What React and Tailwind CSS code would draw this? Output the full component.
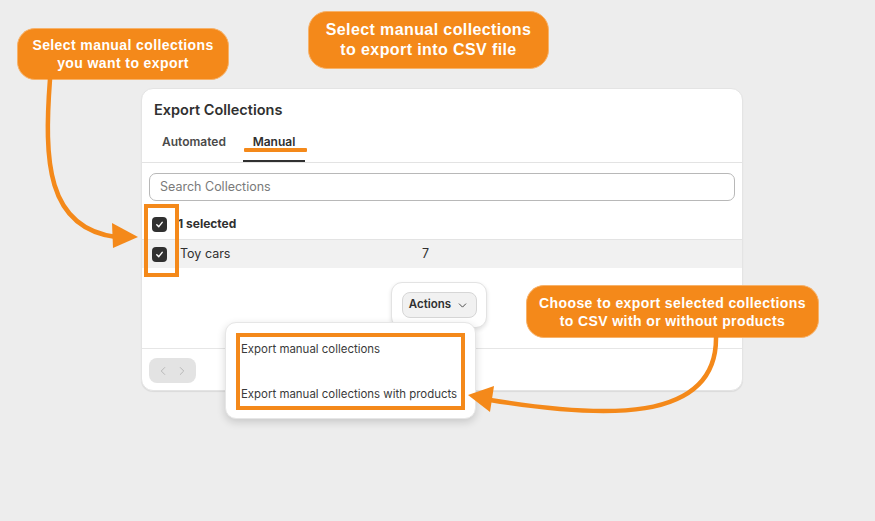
import { ChevronDown, ChevronLeft, ChevronRight } from 'lucide-react'

const ui = { fontFamily: 'Inter, "Noto Sans", sans-serif' }
const callout = { fontFamily: '"Liberation Sans", Arial, sans-serif' }

function Check() {
  return (
    <div className="w-[15px] h-[15px] rounded-[4px] bg-[#303030] flex items-center justify-center">
      <svg width="9" height="9" viewBox="0 0 10 10" fill="none">
        <path d="M2 5.3 L4.2 7.4 L8 2.6" stroke="white" strokeWidth="1.6" strokeLinecap="round" strokeLinejoin="round" />
      </svg>
    </div>
  )
}

function Callout({ className, children }) {
  return (
    <div
      style={callout}
      className={`absolute bg-[#f4891a] border border-[#f7b26a] text-white font-bold text-center flex items-center justify-center tracking-[0.4px] ${className}`}
    >
      {children}
    </div>
  )
}

export default function App() {
  return (
    <div className="relative w-[875px] h-[521px] bg-[#ededed] overflow-hidden pt-[88px] pl-[141px]" style={ui}>

      {/* Export card */}
      <div className="relative w-[602px] bg-white rounded-[12px] border border-[#e4e4e4] shadow-[0_1px_1px_rgba(0,0,0,0.08)] text-[#303030]">
        <div className="pt-[11px] px-[12px] h-[32px] text-[14.5px] font-semibold leading-[20px]">Export Collections</div>

        {/* Tabs */}
        <div className="mt-[3px] flex px-[12px] gap-[9px] border-b border-[#e3e3e3] text-[12px] font-semibold">
          <div className="flex flex-col w-[80px]">
            <div className="h-[36px] pb-[1px] flex items-center pl-[8px] text-[#4a4a4a]">Automated</div>
            <div className="h-[2px]" />
          </div>
          <div className="relative flex flex-col w-[62px]">
            <div className="h-[36px] pb-[1px] flex items-center justify-center">Manual</div>
            <div className="h-[2px] bg-[#303030]" />
            <div className="absolute left-[1px] top-[24px] w-[63px] h-[4px] bg-[#f4891a] rounded-[1px]" />
          </div>
        </div>

        {/* Search */}
        <div className="px-[7px] pt-[10px]">
          <div className="h-[28px] rounded-[7px] border border-[#b8b8b8] flex items-center px-[10px] text-[12.5px] text-[#7a7a7a]">
            Search Collections
          </div>
        </div>

        {/* Header row */}
        <div className="mt-[8px] h-[30px] flex items-center pl-[10px] gap-[11px] text-[12px] font-bold">
          <Check />
          <span>1 selected</span>
        </div>

        {/* Toy cars row */}
        <div className="h-[29px] flex items-center pl-[10px] bg-[#f1f1f1] border-t border-[#e3e3e3] text-[12.5px]">
          <Check />
          <span className="ml-[13px] w-[242px]">Toy cars</span>
          <span>7</span>
        </div>

        <div className="h-[80px]" />

        {/* Footer */}
        <div className="border-t border-[#e6e6e6] pt-[9px] pb-[7px] px-[7px]">
          <div className="w-[47px] h-[25px] rounded-[8px] bg-[#e3e3e3] flex items-center justify-around px-[4px] text-[#b5b5b5]">
            <ChevronLeft size={14} strokeWidth={1.6} />
            <ChevronRight size={14} strokeWidth={1.6} />
          </div>
        </div>

        {/* Orange highlight around checkboxes */}
        <div className="absolute left-[2px] top-[115px] w-[35px] h-[73px] border-[4px] border-[#f4891a]" />

        {/* Bulk actions popover */}
        <div className="absolute left-[249px] top-[193px] w-[96px] h-[46px] bg-white rounded-[11px] border border-[#e3e3e3] shadow-[0_2px_4px_rgba(0,0,0,0.12)] flex items-center justify-center">
          <div className="w-[75px] h-[26px] rounded-[8px] bg-[#f1f1f1] border border-[#d6d6d6] flex items-center justify-center gap-[5px] text-[11.5px] font-semibold">
            Actions
            <ChevronDown size={13} strokeWidth={1.8} className="text-[#4a4a4a]" />
          </div>
        </div>

        {/* Dropdown */}
        <div className="absolute left-[83px] top-[233px] w-[251px] h-[97px] bg-white rounded-[11px] border border-[#e6e6e6] shadow-[0_3px_8px_rgba(0,0,0,0.16)] p-[10px]">
          <div className="h-[77px] border-[4px] border-[#f4891a] flex flex-col text-[11.45px] text-[#3a3a3a] pl-[1px] pt-[1px] whitespace-nowrap">
            <div className="h-[24px] flex items-center">Export manual collections</div>
            <div className="h-[24px] mt-[21px] flex items-center">Export manual collections with products</div>
          </div>
        </div>
      </div>

      {/* Callouts */}
      <Callout className="left-[17px] top-[28px] w-[212px] h-[52px] rounded-[18px] text-[14px] leading-[18px]">
        Select manual collections<br />you want to export
      </Callout>
      <Callout className="left-[308px] top-[11px] w-[241px] h-[58px] rounded-[19px] text-[16px] leading-[20px]">
        Select manual collections<br />to export into CSV file
      </Callout>
      <Callout className="left-[526px] top-[285px] w-[293px] h-[53px] rounded-[18px] text-[14px] leading-[18px]">
        Choose to export selected collections<br />to CSV with or without products
      </Callout>

      {/* Arrows */}
      <svg className="absolute left-0 top-0 pointer-events-none" width="875" height="521" viewBox="0 0 875 521">
        <path d="M50 79 C 44 160, 46 228, 116 237" stroke="#f4891a" strokeWidth="4.5" fill="none" strokeLinecap="round" />
        <polygon points="112,223 138,237 113,248" fill="#f4891a" />
        <path d="M716 336 C 718 425, 600 418, 490 400" stroke="#f4891a" strokeWidth="4.5" fill="none" strokeLinecap="round" />
        <polygon points="468,395 494,386 490,412" fill="#f4891a" />
      </svg>
    </div>
  )
}
